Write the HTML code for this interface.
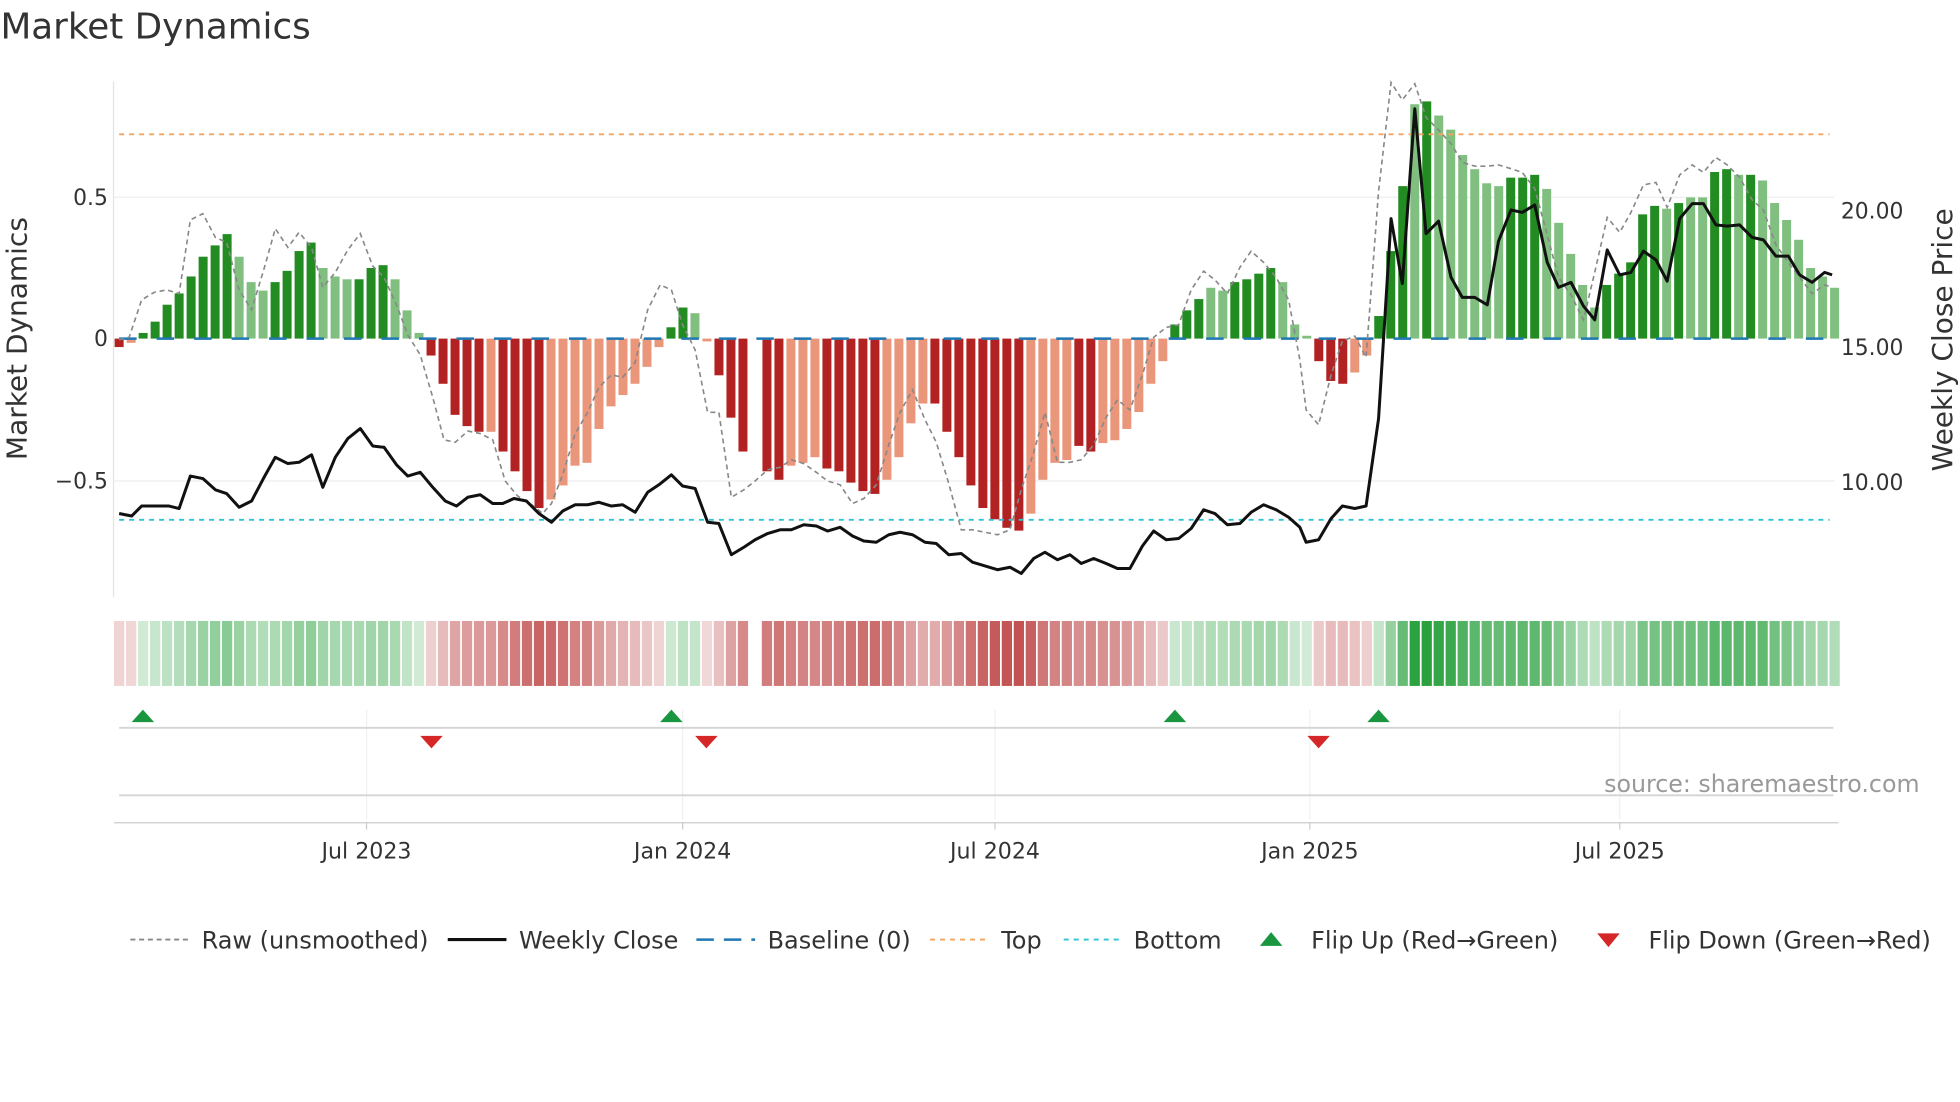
<!DOCTYPE html>
<html><head><meta charset="utf-8"><style>
html,body{margin:0;padding:0;background:#fff;width:1960px;height:1102px;overflow:hidden}
svg{display:block}
text{font-family:"DejaVu Sans","Liberation Sans",sans-serif}
</style></head><body>
<svg id="s" width="1960" height="1102" viewBox="0 0 1568 882" xmlns="http://www.w3.org/2000/svg">
<rect width="1568" height="882" fill="#fff"/>
<text x="0" y="31" font-size="28.6" fill="#333">Market Dynamics</text>
<line x1="90.5" y1="65" x2="90.5" y2="478" stroke="#e4e4e4"/>
<line x1="91" y1="158" x2="1468" y2="158" stroke="#eef0f3" stroke-width="1.2"/>
<line x1="91" y1="385" x2="1468" y2="385" stroke="#eef0f3" stroke-width="1.2"/>
<g font-size="17.5" fill="#333">
<text x="86" y="164" text-anchor="end">0.5</text>
<text x="86" y="277" text-anchor="end">0</text>
<text x="86" y="391" text-anchor="end">−0.5</text>
<text x="1473" y="175">20.00</text>
<text x="1473" y="284">15.00</text>
<text x="1473" y="392">10.00</text>
</g>
<text transform="translate(21,271) rotate(-90)" text-anchor="middle" font-size="22.4" fill="#333">Market Dynamics</text>
<text transform="translate(1562,272) rotate(-90)" text-anchor="middle" font-size="22.4" fill="#333">Weekly Close Price</text>
<g id="bars"></g>
<line x1="95" y1="271" x2="1466" y2="271" stroke="#1f77b4" stroke-width="2" stroke-dasharray="14,16"/>
<line x1="95" y1="107.5" x2="1464" y2="107.5" stroke="#f4a460" stroke-width="1.5" stroke-dasharray="4,4"/>
<line x1="95" y1="416" x2="1464" y2="416" stroke="#2ec4d6" stroke-width="1.5" stroke-dasharray="4,4"/>
<polyline id="raw" fill="none" stroke="#888" stroke-width="1.3" stroke-dasharray="4,3"/>
<polyline id="close" fill="none" stroke="#111" stroke-width="2.4" stroke-linejoin="round"/>
<g id="strip"></g>
<g stroke="#f0f0f0"><line x1="293" y1="568" x2="293" y2="656"/><line x1="546" y1="568" x2="546" y2="656"/><line x1="796" y1="568" x2="796" y2="656"/><line x1="1048" y1="568" x2="1048" y2="656"/><line x1="1296" y1="568" x2="1296" y2="656"/></g>
<line x1="95" y1="582.5" x2="1467" y2="582.5" stroke="#d4d4d4" stroke-width="1.5"/>
<line x1="95" y1="636.5" x2="1467" y2="636.5" stroke="#d4d4d4" stroke-width="1.5"/>
<g fill="#1a9641"><path d="M105,578h18l-9,-10z"/><path d="M528,578h18l-9,-10z"/><path d="M931,578h18l-9,-10z"/><path d="M1094,578h18l-9,-10z"/></g>
<g fill="#d62728"><path d="M336,589h18l-9,10z"/><path d="M556,589h18l-9,10z"/><path d="M1046,589h18l-9,10z"/></g>
<text x="1536" y="634" text-anchor="end" font-size="19" fill="#999">source: sharemaestro.com</text>
<line x1="91" y1="658.5" x2="1471" y2="658.5" stroke="#ccc"/>
<g stroke="#ccc"><line x1="293" y1="658" x2="293" y2="664"/><line x1="546" y1="658" x2="546" y2="664"/><line x1="796" y1="658" x2="796" y2="664"/><line x1="1048" y1="658" x2="1048" y2="664"/><line x1="1296" y1="658" x2="1296" y2="664"/></g>
<g font-size="17.7" fill="#333" text-anchor="middle"><text x="293" y="687">Jul 2023</text><text x="546" y="687">Jan 2024</text><text x="796" y="687">Jul 2024</text><text x="1048" y="687">Jan 2025</text><text x="1296" y="687">Jul 2025</text></g>
<g font-size="19.2" fill="#333">
<line x1="104" y1="752" x2="150" y2="752" stroke="#888" stroke-width="1.5" stroke-dasharray="4,3"/><text x="161" y="759">Raw (unsmoothed)</text>
<line x1="358" y1="752" x2="405" y2="752" stroke="#111" stroke-width="2.5"/><text x="415" y="759">Weekly Close</text>
<line x1="557" y1="752" x2="604" y2="752" stroke="#1f77b4" stroke-width="2" stroke-dasharray="14,8"/><text x="614" y="759">Baseline (0)</text>
<line x1="744" y1="752" x2="790" y2="752" stroke="#f4a460" stroke-width="1.5" stroke-dasharray="4,4"/><text x="801" y="759">Top</text>
<line x1="851" y1="752" x2="897" y2="752" stroke="#2ec4d6" stroke-width="1.5" stroke-dasharray="4,4"/><text x="907" y="759">Bottom</text>
<path d="M1008,757h18l-9,-11z" fill="#1a9641"/><text x="1049" y="759">Flip Up (Red→Green)</text>
<path d="M1278,747h18l-9,11z" fill="#d62728"/><text x="1319" y="759">Flip Down (Green→Red)</text>
</g>
</svg>
<script>
var NS="http://www.w3.org/2000/svg";
var B=[[-0.03,1],[-0.015,0],[0.02,1],[0.06,1],[0.12,1],[0.16,1],[0.22,1],[0.29,1],[0.33,1],[0.37,1],[0.29,0],[0.2,0],[0.17,0],[0.2,1],[0.24,1],[0.31,1],[0.34,1],[0.25,0],[0.22,0],[0.21,0],[0.21,1],[0.25,1],[0.26,1],[0.21,0],[0.1,0],[0.02,0],
[-0.06,1],[-0.16,1],[-0.27,1],[-0.31,1],[-0.33,1],[-0.33,0],[-0.4,1],[-0.47,1],[-0.54,1],[-0.6,1],[-0.57,0],[-0.52,0],[-0.45,0],[-0.44,0],[-0.32,0],[-0.24,0],[-0.2,0],[-0.16,0],[-0.1,0],[-0.03,0],
[0.04,1],[0.11,1],[0.09,0],[-0.01,0],[-0.13,1],[-0.28,1],[-0.4,1],[null,0],[-0.47,1],[-0.5,1],[-0.45,0],[-0.44,0],[-0.42,0],[-0.46,1],[-0.47,1],[-0.51,1],[-0.54,1],[-0.55,1],[-0.5,0],[-0.42,0],[-0.3,0],[-0.23,0],[-0.23,1],[-0.33,1],[-0.42,1],[-0.52,1],[-0.6,1],[-0.64,1],[-0.67,1],[-0.68,1],[-0.62,0],[-0.5,0],[-0.44,0],[-0.43,0],[-0.38,1],[-0.4,1],[-0.37,0],[-0.36,0],[-0.32,0],[-0.26,0],[-0.16,0],[-0.08,0],
[0.05,1],[0.1,1],[0.14,1],[0.18,0],[0.17,0],[0.2,1],[0.21,1],[0.23,1],[0.25,1],[0.2,0],[0.05,0],[0.01,0],[-0.08,1],[-0.15,1],[-0.16,1],[-0.12,0],[-0.06,0],
[0.08,1],[0.31,1],[0.54,1],[0.83,0],[0.84,1],[0.79,0],[0.74,0],[0.65,0],[0.6,0],[0.55,0],[0.54,0],[0.57,1],[0.57,1],[0.58,1],[0.53,0],[0.41,0],[0.3,0],[0.19,0],[0.11,0],[0.19,1],[0.23,1],[0.27,1],[0.44,1],[0.47,1],[0.46,0],[0.48,1],[0.5,0],[0.5,0],[0.59,1],[0.6,1],[0.58,0],[0.58,1],[0.56,0],[0.48,0],[0.42,0],[0.35,0],[0.25,0],[0.22,0],[0.18,0]];
var n=B.length, x0=95, x1=1468, dx=(x1-x0)/(n-1);
var g=document.getElementById('bars'), st=document.getElementById('strip');
function r(p,a){var e=document.createElementNS(NS,'rect');for(var k in a)e.setAttribute(k,a[k]);p.appendChild(e);}
for(var i=0;i<n;i++){var v=B[i][0];var cx=x0+i*dx;if(v===null)continue;
 var h=Math.abs(v)*226, y=v>=0?271-h:271;
 var col=v>=0?(B[i][1]?'#228b22':'#80bf80'):(B[i][1]?'#b22222':'#e9967a');
 r(g,{x:cx-3.6,y:y,width:7.2,height:Math.max(h,1.5),fill:col});
 var a=0.2+0.8*Math.min(Math.abs(v)/0.85,1);
 var sc=v>=0?'rgba(40,160,60,'+a.toFixed(2)+')':'rgba(190,70,70,'+(0.2+0.75*Math.min(Math.abs(v)/0.7,1)).toFixed(2)+')';
 r(st,{x:cx-4.1,y:497,width:8.2,height:52,fill:sc});
}
var C=[[95,411],[105,413],[113,405],[125,405],[135,405],[143,407],[152,381],[162,383],[172,392],[181,395],[191,406],[201,401],[211,382],[220,366],[230,371],[239,370],[249,364],[258,390],[268,366],[278,351],[288,343],[298,357],[307,358],[317,372],[326,381],[336,378],[346,390],[356,401],[365,405],[374,398],[384,396],[394,403],[402,403],[411,399],[421,401],[431,411],[441,418],[450,409],[460,404],[470,404],[479,402],[489,405],[498,404],[508,410],[518,394],[527,388],[537,380],[546,389],[556,391],[566,418],[575,419],[585,444],[595,438],[604,432],[614,427],[624,424],[633,424],[643,420],[653,421],[662,425],[672,422],[682,429],[691,433],[701,434],[711,428],[720,426],[730,428],[740,434],[749,435],[759,444],[769,443],[778,450],[788,453],[798,456],[808,454],[817,459],[827,447],[836,442],[846,448],[856,444],[865,451],[875,447],[885,451],[894,455],[904,455],[914,437],[923,425],[933,432],[943,431],[953,423],[963,408],[972,411],[982,420],[992,419],[1001,410],[1011,404],[1021,408],[1031,414],[1040,422],[1045,434],[1055,432],[1065,415],[1074,405],[1084,407],[1093,405],[1103,335],[1113,175],[1122,227],[1132,87],[1141,187],[1151,177],[1161,222],[1170,238],[1180,238],[1190,244],[1199,193],[1209,168],[1218,170],[1228,164],[1238,210],[1247,230],[1257,226],[1267,245],[1276,256],[1286,200],[1296,220],[1305,218],[1315,201],[1325,208],[1334,225],[1344,175],[1354,163],[1363,163],[1373,180],[1382,181],[1392,180],[1402,190],[1411,192],[1421,205],[1431,205],[1440,220],[1450,226],[1460,218],[1466,220]];
var R=[[95,272],[103,270],[113,240],[123,234],[133,232],[143,235],[152,176],[162,171],[172,190],[181,194],[191,232],[201,248],[211,215],[220,183],[230,198],[239,186],[249,198],[258,230],[268,218],[278,200],[288,187],[298,213],[307,222],[317,244],[326,268],[336,284],[346,318],[355,352],[364,354],[374,345],[384,347],[394,352],[404,385],[414,397],[424,403],[434,411],[441,403],[450,380],[460,347],[470,330],[479,310],[489,300],[498,302],[508,290],[518,248],[528,228],[537,232],[546,260],[556,280],[566,330],[575,330],[585,398],[595,392],[604,385],[614,376],[624,374],[633,368],[643,371],[653,378],[662,385],[672,388],[682,403],[691,399],[701,388],[711,356],[720,330],[730,312],[740,336],[749,354],[759,387],[769,424],[778,424],[788,426],[798,428],[808,424],[817,392],[827,362],[836,330],[846,370],[856,370],[865,368],[875,356],[885,334],[894,320],[904,328],[914,300],[923,270],[933,262],[943,260],[953,232],[963,217],[972,224],[982,235],[992,214],[1001,201],[1011,210],[1021,222],[1031,240],[1040,288],[1045,328],[1055,340],[1065,300],[1074,273],[1084,269],[1093,286],[1103,153],[1113,66],[1122,80],[1132,67],[1141,94],[1151,104],[1161,115],[1170,130],[1180,133],[1190,133],[1199,132],[1209,135],[1218,138],[1228,151],[1238,188],[1247,222],[1257,236],[1267,256],[1276,218],[1286,174],[1296,186],[1305,170],[1315,148],[1325,146],[1334,166],[1344,140],[1354,132],[1363,138],[1373,126],[1382,132],[1392,142],[1402,160],[1411,168],[1421,196],[1431,210],[1440,222],[1450,235],[1460,228],[1466,230]];
document.getElementById('close').setAttribute('points',C.map(function(p){return p.join(',')}).join(' '));
document.getElementById('raw').setAttribute('points',R.map(function(p){return p.join(',')}).join(' '));
</script>
</body></html>
